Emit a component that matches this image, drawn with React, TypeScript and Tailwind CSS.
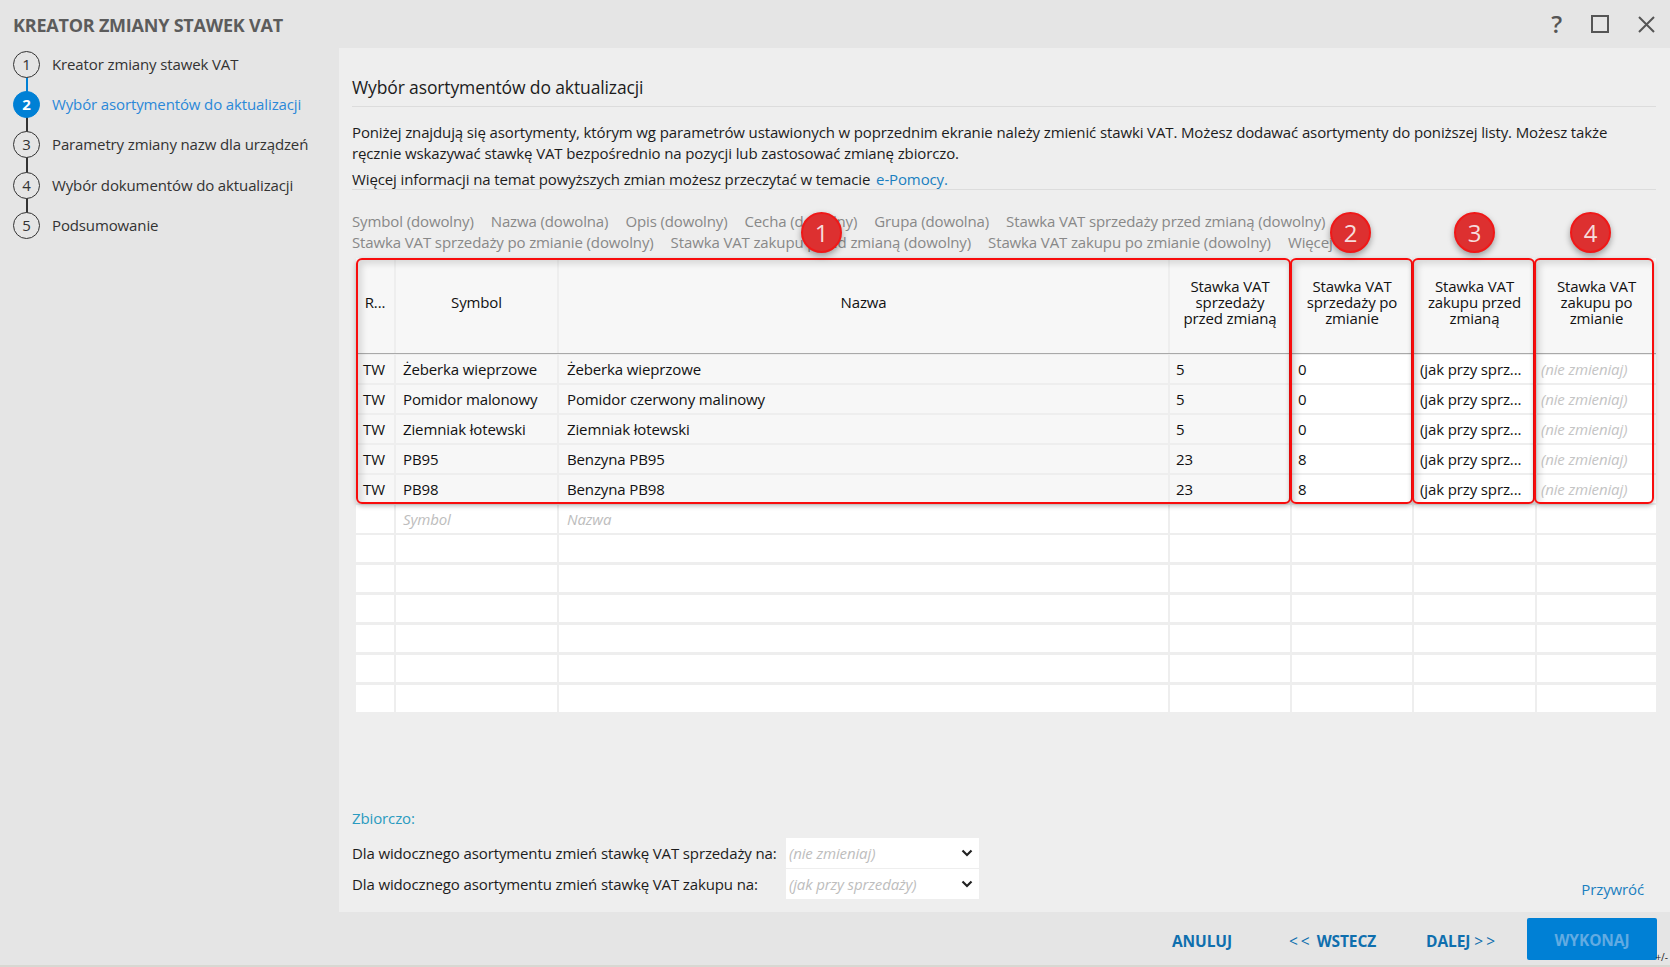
import React from "react";

const cols = "grid grid-cols-[38px_161px_609px_120px_120px_121px_119px] gap-x-[2px]";

const steps = [
  { n: "1", label: "Kreator zmiany stawek VAT", line: "bg-[#0080d5]" },
  { n: "2", label: "Wybór asortymentów do aktualizacji", active: true, line: "bg-[#333333]" },
  { n: "3", label: "Parametry zmiany nazw dla urządzeń", line: "bg-[#333333]" },
  { n: "4", label: "Wybór dokumentów do aktualizacji", line: "bg-[#333333]" },
  { n: "5", label: "Podsumowanie", line: "" },
];

const filters1 = [
  "Symbol (dowolny)",
  "Nazwa (dowolna)",
  "Opis (dowolny)",
  "Cecha (dowolny)",
  "Grupa (dowolna)",
  "Stawka VAT sprzedaży przed zmianą (dowolny)",
];
const filters2 = [
  "Stawka VAT sprzedaży po zmianie (dowolny)",
  "Stawka VAT zakupu przed zmianą (dowolny)",
  "Stawka VAT zakupu po zmianie (dowolny)",
  "Więcej",
];

const rows = [
  ["Żeberka wieprzowe", "Żeberka wieprzowe", "5", "0"],
  ["Pomidor malonowy", "Pomidor czerwony malinowy", "5", "0"],
  ["Ziemniak łotewski", "Ziemniak łotewski", "5", "0"],
  ["PB95", "Benzyna PB95", "23", "8"],
  ["PB98", "Benzyna PB98", "23", "8"],
];

const head = [
  "R...",
  "Symbol",
  "Nazwa",
  "Stawka VAT\nsprzedaży\nprzed zmianą",
  "Stawka VAT\nsprzedaży po\nzmianie",
  "Stawka VAT\nzakupu przed\nzmianą",
  "Stawka VAT\nzakupu po\nzmianie",
];

function Badge({ n, className }: { n: string; className: string }) {
  return (
    <div
      className={
        "absolute top-[-46px] flex h-[41px] w-[41px] items-center justify-center rounded-full border-2 border-[#f01818] bg-[#dd3030] text-[24px] font-medium text-[#f5dcdc] shadow-[0_3px_6px_rgba(0,0,0,0.35)] " +
        className
      }
    >
      {n}
    </div>
  );
}

function RedBox({ className }: { className: string }) {
  return (
    <div
      className={
        "absolute top-0 h-[246px] rounded-[6px] border-2 border-[#f80c0c] shadow-[inset_4px_4px_6px_rgba(0,0,0,0.12),0_2px_5px_rgba(0,0,0,0.25)] " +
        className
      }
    />
  );
}

function Select({ text }: { text: string }) {
  return (
    <div className="flex h-[30px] w-[193px] items-center justify-between bg-white pl-[3px] pr-[6px] italic text-[#bdbdbd]">
      <span>{text}</span>
      <svg width="12" height="8" viewBox="0 0 12 8" fill="none" stroke="#222" strokeWidth="2.2">
        <path d="M1.5 1.5 6 6l4.5-4.5" />
      </svg>
    </div>
  );
}

export default function App() {
  return (
    <div className="flex h-[967px] w-[1670px] flex-col overflow-hidden bg-[#e5e5e5] font-['Open_Sans',sans-serif] text-[15px] tracking-[-0.125px] text-[#1c1c1c]">
      {/* title bar */}
      <header className="flex h-[48px] shrink-0 items-center pl-[13px] pr-[15px]">
        <h1 className="pt-[2px] text-[18px] font-bold tracking-[-0.22px] text-[#5c5c5c]">KREATOR ZMIANY STAWEK VAT</h1>
        <div className="ml-auto flex items-center">
          <span className="mr-[29px] text-[24px] font-semibold leading-none text-[#555555]">?</span>
          <svg width="18" height="18" viewBox="0 0 18 18" className="mr-[29px]" fill="none" stroke="#555" strokeWidth="2">
            <rect x="1" y="1" width="16" height="16" />
          </svg>
          <svg width="17" height="17" viewBox="0 0 17 17" fill="none" stroke="#555" strokeWidth="2">
            <path d="M1 1l15 15M16 1 1 16" />
          </svg>
        </div>
      </header>

      <div className="flex h-[864px] shrink-0">
        {/* steps */}
        <nav className="-mt-[4px] w-[339px] shrink-0 pl-[13px]">
          {steps.map((s) => (
            <div key={s.n} className="relative flex h-[40.3px] items-center">
              <div
                className={
                  "z-10 flex h-[27px] w-[27px] shrink-0 items-center justify-center rounded-full border-[1.5px] " +
                  (s.active
                    ? "border-[#0080d5] bg-[#0080d5] font-bold text-white"
                    : "border-[#333333] bg-[#e5e5e5] text-[#333333]")
                }
              >
                {s.n}
              </div>
              {s.line && <div className={"absolute left-[13px] top-[30px] h-[24px] w-[1.5px] " + s.line} />}
              <span className={"ml-[12px] " + (s.active ? "text-[#2b88d8]" : "text-[#333333]")}>{s.label}</span>
            </div>
          ))}
        </nav>

        {/* main */}
        <main className="flex min-w-0 flex-1 flex-col bg-[#eeeeee] pb-[13px] pl-[13px] pr-[14px]">
          <h2 className="mt-[27px] border-b border-[#dcdcdc] pb-[7px] text-[17.5px] leading-[24px]">
            Wybór asortymentów do aktualizacji
          </h2>
          <p className="mt-[15px] leading-[21px]">
            Poniżej znajdują się asortymenty, którym wg parametrów ustawionych w poprzednim ekranie należy zmienić stawki VAT. Możesz dodawać asortymenty do poniższej listy. Możesz także
            <br />
            ręcznie wskazywać stawkę VAT bezpośrednio na pozycji lub zastosować zmianę zbiorczo.
          </p>
          <p className="mt-[6px] h-[20px] border-b border-[#dcdcdc] leading-[19px]">
            Więcej informacji na temat powyższych zmian możesz przeczytać w temacie{" "}
            <span className="ml-[2px] text-[#1a7fc0]">e-Pomocy.</span>
          </p>
          <div className="mt-[21px] leading-[21px] text-[#888888]">
            <div className="flex gap-x-[17px] whitespace-nowrap">
              {filters1.map((f) => (
                <span key={f}>{f}</span>
              ))}
            </div>
            <div className="flex gap-x-[17px] whitespace-nowrap">
              {filters2.map((f) => (
                <span key={f}>{f}</span>
              ))}
            </div>
          </div>

          {/* table */}
          <div className="relative ml-[4px] mt-[5px] text-[#111111]">
            <div className={cols + " mb-px h-[96px] border-b border-[#a9a9a9] leading-[16px]"}>
              {head.map((h) => (
                <div key={h} className="flex items-center justify-center whitespace-pre-line bg-[#f7f7f7] pb-[8px] text-center">
                  {h}
                </div>
              ))}
            </div>
            {rows.map((r) => (
              <div key={r[0]} className={cols + " mb-[3px] h-[27px] leading-[28px]"}>
                <div className="bg-[#f7f7f7] pl-[7px]">TW</div>
                <div className="bg-[#f7f7f7] pl-[7px]">{r[0]}</div>
                <div className="bg-[#f7f7f7] pl-[8px]">{r[1]}</div>
                <div className="bg-[#f7f7f7] pl-[6px]">{r[2]}</div>
                <div className="bg-white pl-[6px]">{r[3]}</div>
                <div className="overflow-hidden whitespace-nowrap bg-white pl-[6px]">(jak przy sprz...</div>
                <div className="whitespace-nowrap bg-white pl-[4px] italic text-[#c4c4c4]">(nie zmieniaj)</div>
              </div>
            ))}
            {Array.from({ length: 7 }).map((_, i) => (
              <div key={i} className={cols + " mb-[3px] h-[27px] leading-[28px]"}>
                <div className="bg-white" />
                <div className="bg-white pl-[7px] italic text-[#bdbdbd]">{i === 0 ? "Symbol" : ""}</div>
                <div className="bg-white pl-[8px] italic text-[#bdbdbd]">{i === 0 ? "Nazwa" : ""}</div>
                <div className="bg-white" />
                <div className="bg-white" />
                <div className="bg-white" />
                <div className="bg-white" />
              </div>
            ))}
            <RedBox className="left-0 w-[935px]" />
            <RedBox className="left-[934px] w-[123px]" />
            <RedBox className="left-[1056px] w-[123px]" />
            <RedBox className="left-[1178px] w-[120px]" />
            <Badge n="1" className="left-[445px]" />
            <Badge n="2" className="left-[974px]" />
            <Badge n="3" className="left-[1098px]" />
            <Badge n="4" className="left-[1214px]" />
          </div>

          {/* bulk */}
          <div className="mt-auto">
            <div className="leading-[20px] text-[#2a9bc0]">Zbiorczo:</div>
            <div className="mt-[10px] flex items-center">
              <span className="w-[434px]">Dla widocznego asortymentu zmień stawkę VAT sprzedaży na:</span>
              <Select text="(nie zmieniaj)" />
            </div>
            <div className="mt-px flex h-[30px] items-center">
              <span className="w-[434px]">Dla widocznego asortymentu zmień stawkę VAT zakupu na:</span>
              <Select text="(jak przy sprzedaży)" />
              <span className="ml-auto mr-[12px] translate-y-[5px] text-[#1a7fc0]">Przywróć</span>
            </div>
          </div>
        </main>
      </div>

      {/* footer */}
      <footer className="relative flex flex-1 items-start border-b-2 border-[#d8d8d2] pr-[13px] pt-[6px] text-[15.5px] font-bold tracking-[-0.1px] text-[#0f6fae]">
        <div className="ml-auto flex items-center">
          <span className="mr-[57px] mt-[5px]">ANULUJ</span>
          <span className="mr-[50px] mt-[5px]">
            <span className="font-normal tracking-[3px]">&lt;&lt;</span> WSTECZ
          </span>
          <span className="mr-[29px] mt-[5px]">
            DALEJ <span className="font-normal tracking-[3px]">&gt;&gt;</span>
          </span>
          <div className="flex h-[42px] w-[130px] items-center justify-center rounded-[2px] bg-[#0080d5] pt-[4px] text-[#62abe2]">
            WYKONAJ
          </div>
        </div>
        <span className="absolute bottom-[1px] right-[2px] text-[10px] font-normal leading-[14px] tracking-normal text-[#222222]">+/-</span>
      </footer>
    </div>
  );
}
